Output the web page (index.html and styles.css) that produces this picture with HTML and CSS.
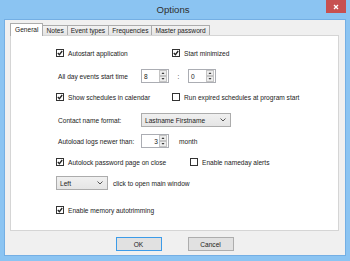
FILE: index.html
```html
<!DOCTYPE html>
<html lang="en">
<head>
    <meta charset="UTF-8">
    <title>Options</title>
    <link rel="stylesheet" href="styles.css">
</head>
<body>
    <div class="window">
        <div class="titlebar">
            <span class="title">Options</span>
            <button class="close">
                <svg width="6" height="6" viewBox="0 0 6 6"><path d="M1 1 L5 5 M5 1 L1 5" stroke="#fff" stroke-width="1.3"/></svg>
            </button>
        </div>

        <div class="client">
            <ul class="tabs">
                <li class="tab active">General</li>
                <li class="tab">Notes</li>
                <li class="tab">Event types</li>
                <li class="tab">Frequencies</li>
                <li class="tab">Master password</li>
            </ul>

            <div class="panel">
                <div class="row">
                    <label class="check col-a"><span class="box"><svg width="6" height="6" viewBox="0 0 6 6"><path d="M0.8 3 L2.4 4.7 L5.2 1" fill="none" stroke="#222" stroke-width="1.3"/></svg></span>Autostart application</label>
                    <label class="check"><span class="box"><svg width="6" height="6" viewBox="0 0 6 6"><path d="M0.8 3 L2.4 4.7 L5.2 1" fill="none" stroke="#222" stroke-width="1.3"/></svg></span>Start minimized</label>
                </div>

                <div class="row wide">
                    <span class="field-label">All day events start time</span>
                    <div class="spin">
                        <span class="spin-value">8</span>
                        <svg class="spin-arrows" width="8" height="12" viewBox="0 0 8 12"><rect x="0.5" y="0.5" width="7" height="5" fill="#ececec" stroke="#c4c4c4"/><rect x="0.5" y="6.5" width="7" height="5" fill="#ececec" stroke="#c4c4c4"/><path d="M2.5 4 L4 2.3 L5.5 4 Z M2.5 8 L4 9.7 L5.5 8 Z" fill="#333"/></svg>
                    </div>
                    <span class="colon">:</span>
                    <div class="spin">
                        <span class="spin-value">0</span>
                        <svg class="spin-arrows" width="8" height="12" viewBox="0 0 8 12"><rect x="0.5" y="0.5" width="7" height="5" fill="#ececec" stroke="#c4c4c4"/><rect x="0.5" y="6.5" width="7" height="5" fill="#ececec" stroke="#c4c4c4"/><path d="M2.5 4 L4 2.3 L5.5 4 Z M2.5 8 L4 9.7 L5.5 8 Z" fill="#333"/></svg>
                    </div>
                </div>

                <div class="row">
                    <label class="check col-a"><span class="box"><svg width="6" height="6" viewBox="0 0 6 6"><path d="M0.8 3 L2.4 4.7 L5.2 1" fill="none" stroke="#222" stroke-width="1.3"/></svg></span>Show schedules in calendar</label>
                    <label class="check"><span class="box"></span>Run expired schedules at program start</label>
                </div>

                <div class="row wide">
                    <span class="field-label">Contact name format:</span>
                    <div class="select select-name">
                        <span>Lastname Firstname</span>
                        <svg width="6" height="4" viewBox="0 0 6 4"><path d="M0.5 0.5 L3 3 L5.5 0.5" fill="none" stroke="#444" stroke-width="0.9"/></svg>
                    </div>
                </div>

                <div class="row">
                    <span class="field-label">Autoload logs newer than:</span>
                    <div class="spin">
                        <span class="spin-value right">3</span>
                        <svg class="spin-arrows" width="8" height="12" viewBox="0 0 8 12"><rect x="0.5" y="0.5" width="7" height="5" fill="#ececec" stroke="#c4c4c4"/><rect x="0.5" y="6.5" width="7" height="5" fill="#ececec" stroke="#c4c4c4"/><path d="M2.5 4 L4 2.3 L5.5 4 Z M2.5 8 L4 9.7 L5.5 8 Z" fill="#333"/></svg>
                    </div>
                    <span class="unit">month</span>
                </div>

                <div class="row">
                    <label class="check col-b"><span class="box"><svg width="6" height="6" viewBox="0 0 6 6"><path d="M0.8 3 L2.4 4.7 L5.2 1" fill="none" stroke="#222" stroke-width="1.3"/></svg></span>Autolock password page on close</label>
                    <label class="check"><span class="box"></span>Enable nameday alerts</label>
                </div>

                <div class="row">
                    <div class="select select-side">
                        <span>Left</span>
                        <svg width="6" height="4" viewBox="0 0 6 4"><path d="M0.5 0.5 L3 3 L5.5 0.5" fill="none" stroke="#444" stroke-width="0.9"/></svg>
                    </div>
                    <span class="hint">click to open main window</span>
                </div>

                <div class="row last">
                    <label class="check"><span class="box"><svg width="6" height="6" viewBox="0 0 6 6"><path d="M0.8 3 L2.4 4.7 L5.2 1" fill="none" stroke="#222" stroke-width="1.3"/></svg></span>Enable memory autotrimming</label>
                </div>
            </div>

            <div class="buttons">
                <button class="btn default">OK</button>
                <button class="btn">Cancel</button>
            </div>
        </div>
    </div>
</body>
</html>
```

FILE: styles.css
```css
:root {
    --frame: #8bc4f2;
    --frame-edge: #74afe4;
    --close: #c75050;
    --face: #f0f0f0;
    --tab-border: #acacac;
    --panel-border: #d5d5d5;
    --text: #222;
}

* {
    margin: 0;
    padding: 0;
    box-sizing: border-box;
}

body {
    font-family: "Liberation Sans", Arial, sans-serif;
    font-size: 6.6px;
    color: var(--text);
    width: 350px;
    height: 261px;
    overflow: hidden;
}

.window {
    width: 350px;
    height: 261px;
    background: var(--frame);
    padding: 0 5px 6px;
    display: flex;
    flex-direction: column;
}

.titlebar {
    height: 20px;
    margin: 0 -5px;
    padding-right: 4px;
    display: grid;
    grid-template-columns: 1fr auto 1fr;
    align-items: start;
}

.title {
    grid-column: 2;
    font-size: 9.6px;
    color: #2e2e2e;
    line-height: 20px;
}

.close {
    grid-column: 3;
    justify-self: end;
    width: 20px;
    height: 13px;
    border: none;
    background: var(--close);
    display: flex;
    align-items: center;
    justify-content: center;
}

.client {
    flex: 1;
    background: var(--face);
    box-shadow: 0 0 0 1px var(--frame-edge);
    padding: 3px 6px 0 5px;
    display: flex;
    flex-direction: column;
}

/* tabs */
.tabs {
    list-style: none;
    display: flex;
    align-items: flex-end;
    height: 12px;
    position: relative;
    z-index: 1;
}

.tab {
    height: 10px;
    padding: 0 3px;
    margin-left: -1px;
    border: 1px solid var(--tab-border);
    border-bottom: none;
    background: linear-gradient(#f2f2f2, #e4e4e4);
    display: flex;
    align-items: center;
    white-space: nowrap;
}

.tab.active {
    height: 13px;
    margin-left: 0;
    margin-bottom: -1px;
    padding: 0 4px 2px;
    background: #fff;
}

.panel {
    height: 196px;
    background: #fff;
    border: 1px solid var(--panel-border);
    padding: 10px 0 0 45px;
    display: flex;
    flex-direction: column;
    gap: 7px;
}

.row {
    height: 14px;
    display: flex;
    align-items: center;
    white-space: nowrap;
}

.row.wide {
    margin-top: 2px;
}

.row.last {
    margin-top: 6px;
}

/* checkboxes */
.check {
    display: flex;
    align-items: center;
    gap: 4px;
}

.col-a {
    width: 116px;
}

.col-b {
    width: 134px;
}

.box {
    width: 8px;
    height: 8px;
    border: 1px solid #333;
    background: #fff;
    display: flex;
    align-items: center;
    justify-content: center;
}

.field-label {
    width: 85px;
    padding-left: 2px;
}

/* spin boxes */
.spin {
    width: 28px;
    height: 14px;
    border: 1px solid #abadb3;
    background: #fff;
    display: flex;
    align-items: center;
    padding: 0 1px 0 2px;
}

.spin-value {
    flex: 1;
}

.spin-value.right {
    text-align: right;
    padding-right: 1px;
}

.colon {
    width: 19px;
    text-align: center;
}

.unit {
    margin-left: 10px;
}

/* combo boxes */
.select {
    height: 14px;
    border: 1px solid var(--tab-border);
    background: linear-gradient(#f0f0f0, #e5e5e5);
    display: flex;
    align-items: center;
    justify-content: space-between;
    padding: 0 4px 0 3px;
}

.select-name {
    width: 90px;
}

.select-side {
    width: 52px;
}

.hint {
    margin-left: 5px;
}

/* dialog buttons */
.buttons {
    margin-top: 6px;
    display: flex;
    justify-content: center;
    gap: 26px;
}

.btn {
    width: 46px;
    height: 14px;
    font-family: inherit;
    font-size: 6.6px;
    color: var(--text);
    background: #e1e1e1;
    border: 1px solid #adadad;
}

.btn.default {
    border-color: #3c9be8;
}
```
